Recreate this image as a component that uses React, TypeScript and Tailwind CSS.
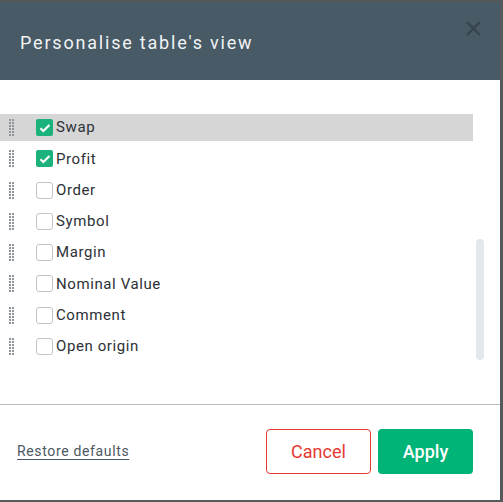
import React from 'react';

const columns = [
    { name: 'Swap', checked: true, active: true },
    { name: 'Profit', checked: true },
    { name: 'Order', checked: false },
    { name: 'Symbol', checked: false },
    { name: 'Margin', checked: false },
    { name: 'Nominal Value', checked: false },
    { name: 'Comment', checked: false },
    { name: 'Open origin', checked: false },
];

const DragHandle: React.FC = () => (
    <div className="grid grid-cols-2 gap-x-[1px] gap-y-[1px] w-[5px]">
        {Array.from({ length: 12 }).map((_, i) => (
            <span key={i} className="w-[2px] h-[2px] bg-[#8f959b]" />
        ))}
    </div>
);

const Checkbox: React.FC<{ checked: boolean }> = ({ checked }) =>
    checked ? (
        <span className="w-[17px] h-[17px] rounded-[2px] bg-[#1bb27b] flex items-center justify-center">
            <svg viewBox="0 0 16 16" className="w-[14px] h-[14px]">
                <path d="M2.8 8.3l3.3 3.2 7-7" fill="none" stroke="#fff" strokeWidth="2.4" />
            </svg>
        </span>
    ) : (
        <span className="w-[17px] h-[17px] rounded-[3px] border border-[#c4c4c4] bg-white" />
    );

const App: React.FC = () => {
    return (
        <div className="w-[503px] h-[502px] bg-[#55595c] overflow-hidden font-['Roboto',sans-serif]">
            <div className="w-[500px] h-[500px] bg-white flex flex-col border-t-2 border-[#54585b]">
                <div className="h-[78px] bg-[#475a66] flex items-start justify-between pl-[20px] pr-[20px]">
                    <h1 className="mt-[28px] text-[18px] font-normal tracking-[1.8px] text-[#f1f3f4] leading-[26px]">
                        Personalise table's view
                    </h1>
                    <svg viewBox="0 0 16 16" className="w-[17px] h-[17px] mt-[18px] mr-[-2px]">
                        <path d="M2 2l12 12M14 2L2 14" stroke="#37444d" strokeWidth="2" fill="none" />
                    </svg>
                </div>

                <div className="relative h-[325px] overflow-hidden border-b border-[#bdbdbd]">
                    <div className="flex flex-col gap-[4.3px] pt-[34px] pr-[27px]">
                        {columns.map((col) => (
                            <div
                                key={col.name}
                                className={`h-[27px] flex items-center pl-[9px] ${col.active ? 'bg-[#d6d6d6]' : ''}`}
                            >
                                <DragHandle />
                                <div className="ml-[22px] flex items-center gap-[3px]">
                                    <Checkbox checked={col.checked} />
                                    <span className="text-[15px] font-normal tracking-[0.6px] text-[#2c3136]">{col.name}</span>
                                </div>
                            </div>
                        ))}
                    </div>
                    <div className="absolute right-[16px] top-[159px] w-[8px] h-[121px] rounded-full bg-[#e4e8eb]" />
                </div>

                <div className="flex-1 flex items-center justify-between pl-[17px] pr-[27px] pb-[2px]">
                    <button className="text-[14px] tracking-[0.65px] text-[#4d5862] underline underline-offset-[3px]">
                        Restore defaults
                    </button>
                    <div className="flex gap-[7px]">
                        <button className="w-[105px] h-[45px] rounded-[4px] border border-[#e53935] text-[18px] text-[#e53935]">
                            Cancel
                        </button>
                        <button className="w-[95px] h-[45px] rounded-[4px] bg-[#00b377] text-[18px] font-medium text-white">
                            Apply
                        </button>
                    </div>
                </div>
            </div>
        </div>
    );
};

export default App;
